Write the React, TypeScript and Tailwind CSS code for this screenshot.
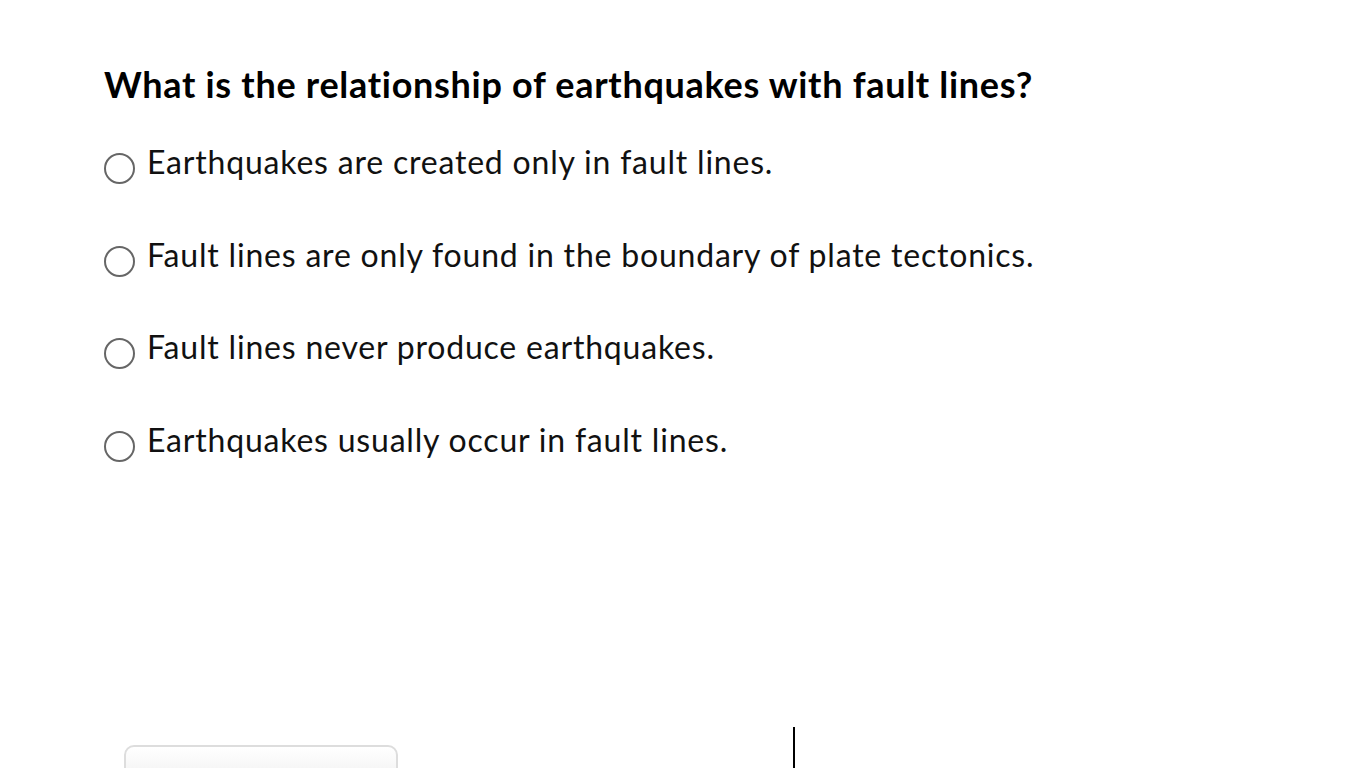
import React from "react";

const options = [
  "Earthquakes are created only in fault lines.",
  "Fault lines are only found in the boundary of plate tectonics.",
  "Fault lines never produce earthquakes.",
  "Earthquakes usually occur in fault lines.",
];

export default function App() {
  return (
    <div className="w-[1366px] h-[768px] bg-white overflow-hidden relative" style={{ fontFamily: "Lato, 'Noto Sans', sans-serif" }}>
      <div className="pl-[104px] pt-[61px]">
        <h1 className="text-[36px] leading-[46px] font-bold text-black tracking-[0.7px]">
          What is the relationship of earthquakes with fault lines?
        </h1>
        <div className="mt-[37px] flex flex-col">
          {options.map((o, i) => (
            <label key={i} className="flex items-start h-[92.7px]">
              <span className="mt-[9px] w-[31px] h-[31px] rounded-full border-2 border-[#666] shrink-0" />
              <span className="ml-[12px] text-[32px] leading-[36px] text-[#111] tracking-[0.8px]">{o}</span>
            </label>
          ))}
        </div>
      </div>
      <div className="absolute left-[124px] top-[745px] w-[274px] h-[40px] rounded-[10px] border-2 border-[#ddd] bg-gradient-to-b from-white to-[#f0f0f0]" />
      <div className="absolute left-[793px] top-[727px] w-[2px] h-[41px] bg-black" />
    </div>
  );
}
